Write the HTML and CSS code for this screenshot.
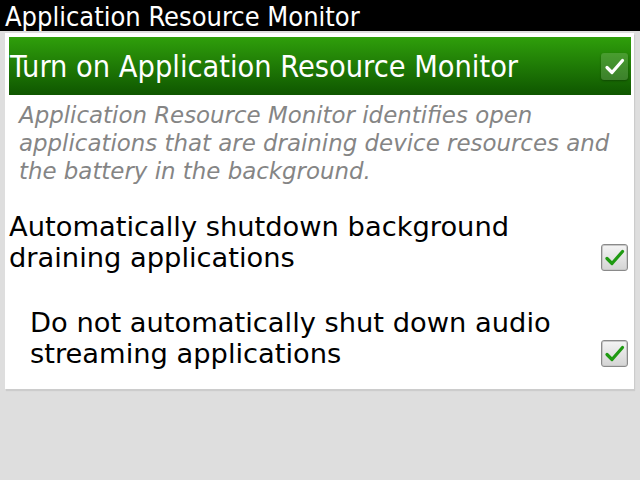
FILE: index.html
```html
<!DOCTYPE html>
<html>
<head>
<meta charset="utf-8">
<link rel="stylesheet" href="styles.css">
</head>
<body>
<div class="titlebar">Application Resource Monitor</div>
<div class="card">
  <div class="header-row">
    <span class="header-label">Turn on Application Resource Monitor</span>
    <span class="check check-light">
      <svg viewBox="0 0 27 27" width="27" height="27"><path d="M6 14.5 L11 19.5 L21.5 7.5" fill="none" stroke="#fff" stroke-width="3.2" stroke-linecap="round" stroke-linejoin="round"/></svg>
    </span>
  </div>
  <p class="desc">Application Resource Monitor identifies open<br>applications that are draining device resources and<br>the battery in the background.</p>
  <div class="option">
    <span class="option-label">Automatically shutdown background<br>draining applications</span>
    <span class="check">
      <svg viewBox="0 0 27 27" width="27" height="27"><path d="M6 14.5 L11 19.5 L21.5 7.5" fill="none" stroke="#1f9a12" stroke-width="3.2" stroke-linecap="round" stroke-linejoin="round"/></svg>
    </span>
  </div>
  <div class="option option-sub">
    <span class="option-label">Do not automatically shut down audio<br>streaming applications</span>
    <span class="check">
      <svg viewBox="0 0 27 27" width="27" height="27"><path d="M6 14.5 L11 19.5 L21.5 7.5" fill="none" stroke="#1f9a12" stroke-width="3.2" stroke-linecap="round" stroke-linejoin="round"/></svg>
    </span>
  </div>
</div>
</body>
</html>
```

FILE: styles.css
```css
html, body {
  margin: 0;
  padding: 0;
}
body {
  background: #dedede;
  font-family: "DejaVu Sans", sans-serif;
  width: 640px;
  height: 480px;
  overflow: hidden;
}
.titlebar {
  height: 31px;
  background: #000;
  color: #fff;
  font-family: "DejaVu Sans Condensed", "DejaVu Sans", sans-serif;
  font-stretch: condensed;
  font-size: 27px;
  line-height: 34px;
  padding-left: 5px;
  white-space: nowrap;
  overflow: hidden;
}
.card {
  margin: 2px 6px 0 5px;
  background: #fff;
  padding: 4px 3px 20px 4px;
  box-shadow: 1px 2px 1px rgba(0,0,0,0.08);
}
.header-row {
  height: 58px;
  background: linear-gradient(#2f9f0b, #0f5600);
  display: flex;
  align-items: center;
  justify-content: space-between;
  padding: 0 3px 0 1px;
}
.header-label {
  color: #fff;
  font-family: "DejaVu Sans Condensed", "DejaVu Sans", sans-serif;
  font-stretch: condensed;
  font-size: 30.4px;
  white-space: nowrap;
}
.check {
  width: 27px;
  height: 27px;
  flex: none;
  box-sizing: border-box;
  border-radius: 3px;
  border: 1px solid #8a8a8a;
  background: linear-gradient(#f4f4f4, #d4d4d4);
  box-shadow: inset 0 0 0 1px #c8c8c8;
  display: flex;
  align-items: center;
  justify-content: center;
}
.check svg {
  display: block;
  flex: none;
  margin: -1px;
}
.check-light {
  border: none;
  background: rgba(255,255,255,0.16);
  box-shadow: 0 1px 2px rgba(0,0,0,0.3);
}
.check-light svg {
  margin: 0;
}
.desc {
  margin: 6px 0 0 0;
  padding: 0 6px 0 10px;
  color: #858585;
  font-style: italic;
  font-size: 22.9px;
  line-height: 28px;
  white-space: nowrap;
}
.option {
  display: flex;
  align-items: flex-end;
  justify-content: space-between;
  padding: 0 3px 0 0;
  margin-top: 26px;
}
.option-sub {
  margin-top: 34px;
  padding-left: 21px;
}
.option-label {
  color: #000;
  font-size: 27.3px;
  line-height: 31px;
  white-space: nowrap;
}
.option .check {
  margin-bottom: 2px;
}
```
